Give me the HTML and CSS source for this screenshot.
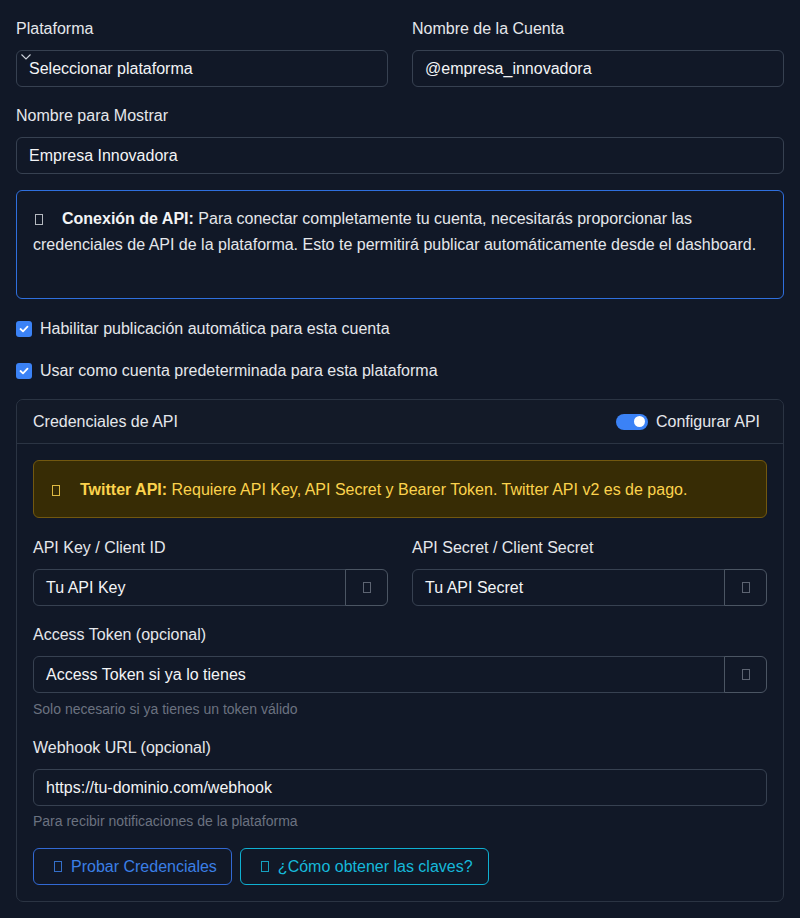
FILE: index.html
```html
<!DOCTYPE html>
<html lang="es">
<head>
<meta charset="utf-8">
<title>Cuenta</title>
<link rel="stylesheet" href="styles.css">
</head>
<body>
<div class="page">
  <div class="row2">
    <div class="field">
      <label class="label">Plataforma</label>
      <div class="input select">
        <svg class="chev" width="10" height="6" viewBox="0 0 10 6"><path d="M0.5 0.5 L5 5 L9.5 0.5" fill="none" stroke="#cfd4dc" stroke-width="1.1"/></svg>
        Seleccionar plataforma
      </div>
    </div>
    <div class="field">
      <label class="label">Nombre de la Cuenta</label>
      <div class="input">@empresa_innovadora</div>
    </div>
  </div>
  <div class="field">
    <label class="label">Nombre para Mostrar</label>
    <div class="input">Empresa Innovadora</div>
  </div>

  <div class="alert-info">
    <span class="tofu ic-info"></span><strong>Conexión de API:</strong> Para conectar completamente tu cuenta, necesitarás proporcionar las credenciales de API de la plataforma. Esto te permitirá publicar automáticamente desde el dashboard.
  </div>

  <div class="check first">
    <span class="box"><svg width="10" height="8" viewBox="0 0 10 8"><path d="M1.5 4 L4 6.3 L8.5 1.7" fill="none" stroke="#fff" stroke-width="1.8" stroke-linecap="round" stroke-linejoin="round"/></svg></span>
    Habilitar publicación automática para esta cuenta
  </div>
  <div class="check second">
    <span class="box"><svg width="10" height="8" viewBox="0 0 10 8"><path d="M1.5 4 L4 6.3 L8.5 1.7" fill="none" stroke="#fff" stroke-width="1.8" stroke-linecap="round" stroke-linejoin="round"/></svg></span>
    Usar como cuenta predeterminada para esta plataforma
  </div>

  <div class="card">
    <div class="card-header">
      <span>Credenciales de API</span>
      <div class="switch-wrap">
        <span class="switch"><span class="knob"></span></span>
        <span>Configurar API</span>
      </div>
    </div>
    <div class="card-body">
      <div class="alert-warn">
        <span class="tofu ic-warn"></span><strong>Twitter API:</strong> Requiere API Key, API Secret y Bearer Token. Twitter API v2 es de pago.
      </div>

      <div class="row2">
        <div class="field">
          <label class="label">API Key / Client ID</label>
          <div class="group">
            <div class="input gin">Tu API Key</div>
            <div class="eye"><span class="tofu"></span></div>
          </div>
        </div>
        <div class="field">
          <label class="label">API Secret / Client Secret</label>
          <div class="group">
            <div class="input gin">Tu API Secret</div>
            <div class="eye"><span class="tofu"></span></div>
          </div>
        </div>
      </div>

      <div class="field tight">
        <label class="label">Access Token (opcional)</label>
        <div class="group">
          <div class="input gin">Access Token si ya lo tienes</div>
          <div class="eye"><span class="tofu"></span></div>
        </div>
        <div class="help">Solo necesario si ya tienes un token válido</div>
      </div>

      <div class="field last">
        <label class="label">Webhook URL (opcional)</label>
        <div class="input">https://tu-dominio.com/webhook</div>
        <div class="help help2">Para recibir notificaciones de la plataforma</div>
      </div>

      <div class="buttons">
        <button class="btn btn-blue"><span class="tofu"></span>Probar Credenciales</button>
        <button class="btn btn-cyan"><span class="tofu"></span>¿Cómo obtener las claves?</button>
      </div>
    </div>
  </div>
</div>
</body>
</html>
```
FILE: styles.css
```css
* { box-sizing: border-box; }
html, body { margin: 0; padding: 0; }
body {
  background: #111827;
  color: #e5e7eb;
  font-family: "Liberation Sans", Arial, sans-serif;
  font-size: 16px;
}
.page { padding: 16px 16px 0 16px; }
.row2 {
  display: grid;
  grid-template-columns: 1fr 1fr;
  column-gap: 24px;
}
.field { margin-bottom: 16px; }
.label {
  display: block;
  line-height: 26px;
  margin-bottom: 8px;
  color: #e5e7eb;
}
.input {
  height: 37px;
  border: 1px solid #374151;
  border-radius: 6px;
  padding: 0 12px;
  display: flex;
  align-items: center;
  color: #f3f4f6;
  line-height: 19px;
  white-space: nowrap;
}
.select { position: relative; }
.chev { position: absolute; left: 4px; top: 3px; }

.tofu {
  display: inline-block;
  width: 8px;
  height: 11px;
  border: 1px solid currentColor;
  opacity: 0.85;
  vertical-align: -1px;
}

.alert-info {
  border: 1px solid #2f6fde;
  border-radius: 6px;
  padding: 15px 16px 40px 16px;
  line-height: 26px;
  color: #e5e7eb;
  margin-bottom: 18px;
}
.alert-info strong { color: #f3f4f6; }
.ic-info { margin-left: 2px; margin-right: 19px; color: #d1d5db; }

.check {
  display: flex;
  align-items: center;
  gap: 8px;
  line-height: 24px;
  color: #e5e7eb;
}
.check.first { margin-bottom: 18px; }
.check.second { margin-bottom: 16px; }
.box {
  width: 16px;
  height: 16px;
  border-radius: 3px;
  background: #3b82f6;
  display: flex;
  align-items: center;
  justify-content: center;
}

.card {
  border: 1px solid #2b3443;
  border-radius: 7px;
}
.card-header {
  height: 44px;
  border-bottom: 1px solid #2b3443;
  display: flex;
  align-items: center;
  justify-content: space-between;
  padding: 0 23px 0 16px;
  color: #e5e7eb;
  background: #131a28;
  border-radius: 7px 7px 0 0;
}
.switch-wrap { display: flex; align-items: center; gap: 8px; }
.switch {
  position: relative;
  width: 32px;
  height: 16px;
  border-radius: 8px;
  background: #3b82f6;
  display: inline-block;
}
.knob {
  position: absolute;
  right: 3px;
  top: 2.5px;
  width: 11px;
  height: 11px;
  border-radius: 50%;
  background: #fff;
}
.card-body { padding: 16px; }

.alert-warn {
  background: #372c05;
  border: 1px solid #72580f;
  border-radius: 6px;
  padding: 17px 16px 15px 16px;
  line-height: 24px;
  color: #fcd34d;
  margin-bottom: 17px;
}
.ic-warn { margin-left: 2px; margin-right: 20px; }

.group { display: flex; }
.gin {
  flex: 1;
  border-top-right-radius: 0;
  border-bottom-right-radius: 0;
}
.eye {
  width: 43px;
  height: 37px;
  margin-left: -1px;
  border: 1px solid #4b5563;
  border-radius: 0 6px 6px 0;
  display: flex;
  align-items: center;
  justify-content: center;
  color: #6b7280;
}

.field.tight { margin-bottom: 16px; }
.field.last { margin-bottom: 0; }
.help {
  font-size: 14px;
  line-height: 20px;
  color: #6b7280;
  margin-top: 6px;
}
.help2 { margin-top: 5px; }

.buttons {
  display: flex;
  gap: 8px;
  margin-top: 17px;
}
.btn {
  height: 37px;
  background: transparent;
  border-radius: 6px;
  padding: 0 14px;
  font-family: "Liberation Sans", Arial, sans-serif;
  font-size: 16px;
  display: flex;
  align-items: center;
  cursor: pointer;
}
.btn .tofu { margin-left: 6px; margin-right: 9px; }
.btn-blue { border: 1px solid #3269d4; color: #3b7fe6; }
.btn-cyan { border: 1px solid #0fb0d2; color: #16b8da; padding-right: 15px; }
```
